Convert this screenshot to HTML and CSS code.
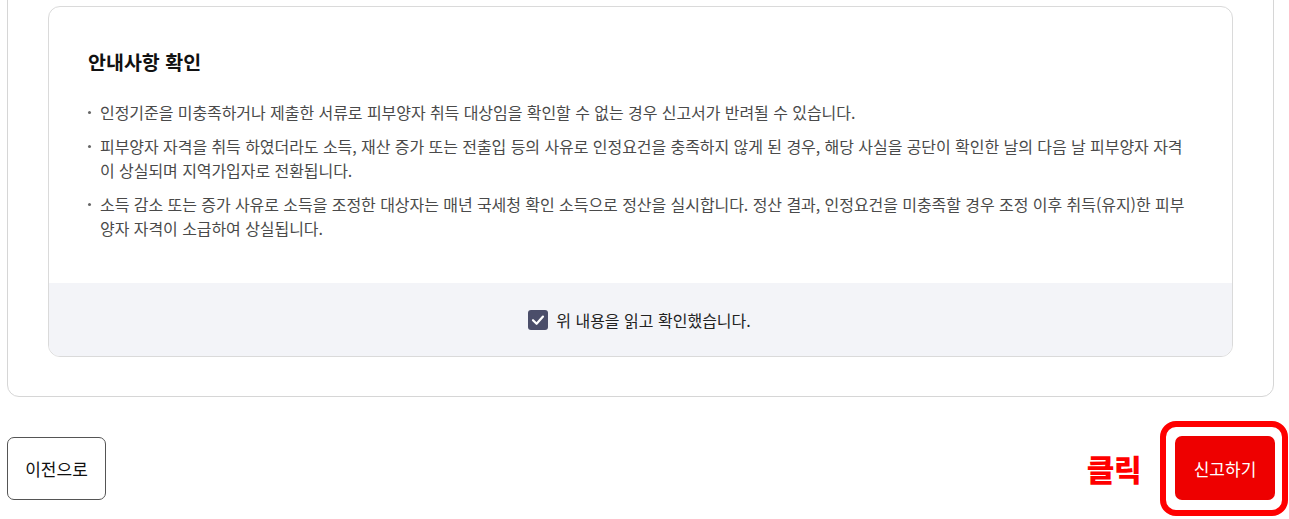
FILE: index.html
```html
<!DOCTYPE html>
<html lang="ko">
<head>
<meta charset="utf-8">
<link rel="stylesheet" href="styles.css">
</head>
<body>
<div class="page">
  <section class="card">
    <div class="notice">
      <div class="notice-body">
        <h2 class="notice-title">안내사항 확인</h2>
        <ul class="notice-list">
          <li>인정기준을 미충족하거나 제출한 서류로 피부양자 취득 대상임을 확인할 수 없는 경우 신고서가 반려될 수 있습니다.</li>
          <li>피부양자 자격을 취득 하였더라도 소득, 재산 증가 또는 전출입 등의 사유로 인정요건을 충족하지 않게 된 경우, 해당 사실을 공단이 확인한 날의 다음 날 피부양자 자격이 상실되며 지역가입자로 전환됩니다.</li>
          <li>소득 감소 또는 증가 사유로 소득을 조정한 대상자는 매년 국세청 확인 소득으로 정산을 실시합니다. 정산 결과, 인정요건을 미충족할 경우 조정 이후 취득(유지)한 피부양자 자격이 소급하여 상실됩니다.</li>
        </ul>
      </div>
      <div class="notice-footer">
        <label class="agree">
          <span class="checkbox">
            <svg viewBox="0 0 20 20" width="20" height="20"><path d="M5 10.2 L8.6 13.8 L15 6.6" fill="none" stroke="#fff" stroke-width="2.2" stroke-linecap="round" stroke-linejoin="round"/></svg>
          </span>
          <span class="agree-text">위 내용을 읽고 확인했습니다.</span>
        </label>
      </div>
    </div>
  </section>
  <div class="actions">
    <button class="btn btn-prev">이전으로</button>
    <div class="submit-wrap">
      <span class="click-label">클릭</span>
      <span class="highlight"></span>
      <button class="btn btn-submit">신고하기</button>
    </div>
  </div>
</div>
</body>
</html>
```
FILE: styles.css
```css
* { box-sizing: border-box; }
html, body { margin: 0; padding: 0; background: #fff; overflow: hidden; }
body {
  font-family: "Noto Sans CJK KR", "Noto Sans", sans-serif;
  color: #222;
  width: 1289px;
  height: 519px;
}
.page {
  padding: 0 15px 0 7px;
}
.card {
  margin-top: -35px;
  border: 1px solid #d6d6d6;
  border-radius: 12px;
  padding: 40px 40px 39px;
}
.notice {
  border: 1px solid #dadada;
  border-radius: 12px;
  overflow: hidden;
}
.notice-body {
  padding: 39px 40px 43px 39px;
}
.notice-title {
  margin: 0 0 22px;
  font-size: 19.5px;
  line-height: 32px;
  font-weight: 700;
  color: #111;
}
.notice-list {
  list-style: none;
  margin: 0;
  padding: 0;
}
.notice-list li {
  position: relative;
  padding-left: 12px;
  font-size: 16px;
  line-height: 24px;
  letter-spacing: -0.06px;
  color: #4a4a4a;
  margin-bottom: 10px;
}
.notice-list li:last-child { margin-bottom: 0; }
.notice-list li::before {
  content: "";
  position: absolute;
  left: 0;
  top: 11px;
  width: 3px;
  height: 3px;
  border-radius: 50%;
  background: #666;
}
.notice-footer {
  background: #f3f4f8;
  height: 73px;
  display: flex;
  align-items: center;
  justify-content: center;
}
.agree {
  display: flex;
  align-items: center;
  gap: 8px;
  margin-left: -2px;
}
.checkbox {
  width: 20px;
  height: 20px;
  border-radius: 3px;
  background: #4b4e6a;
  display: flex;
}
.agree-text {
  font-size: 16px;
  color: #222;
  line-height: 20px;
}
.actions {
  display: flex;
  justify-content: space-between;
  align-items: center;
  margin-top: 39px;
}
.btn {
  font-family: inherit;
  font-size: 17px;
  cursor: pointer;
  border-radius: 7px;
}
.btn-prev {
  width: 99px;
  height: 63px;
  background: #fff;
  border: 1px solid #555;
  color: #111;
}
.submit-wrap {
  position: relative;
  margin-right: -1px;
}
.btn-submit {
  display: block;
  width: 100px;
  height: 64px;
  background: #ee0000;
  border: none;
  color: #fff;
}
.highlight {
  position: absolute;
  top: -15px;
  bottom: -16px;
  left: -15px;
  right: -13px;
  border: 6px solid #ff0000;
  border-radius: 16px;
  pointer-events: none;
}
.click-label {
  position: absolute;
  right: 134px;
  top: 50%;
  transform: translateY(-50%);
  font-size: 30px;
  font-weight: 900;
  letter-spacing: -0.5px;
  color: #ff0000;
  white-space: nowrap;
}
```
